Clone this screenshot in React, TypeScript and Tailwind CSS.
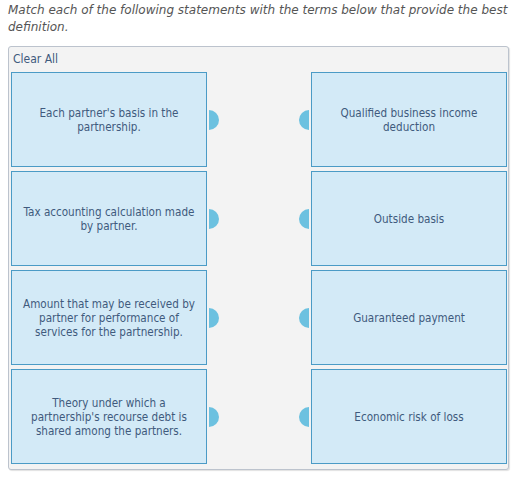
const rows = [
  { left: "Each partner's basis in the partnership.", right: 'Qualified business income deduction' },
  { left: 'Tax accounting calculation made by partner.', right: 'Outside basis' },
  { left: 'Amount that may be received by partner for performance of services for the partnership.', right: 'Guaranteed payment' },
  { left: "Theory under which a partnership's recourse debt is shared among the partners.", right: 'Economic risk of loss' },
];

function Box({ text }: { text: string }) {
  return (
    <div className="w-[196px] h-[95px] bg-[#d3eaf7] border border-[#4b9bc6] flex items-center justify-center px-[10px] text-center text-[11.6px] leading-[14px] text-[#3f5a7d]">
      {text}
    </div>
  );
}

export default function App() {
  return (
    <div className="w-[519px] h-[478px] bg-white pl-[8px] pt-[2px] font-['DejaVu_Sans_Condensed','DejaVu_Sans',sans-serif]">
      <p className="italic font-['DejaVu_Sans',sans-serif] text-[12px] leading-[17px] text-[#555] pr-[4px]">
        Match each of the following statements with the terms below that provide the best definition.
      </p>
      <div className="mt-[10px] w-[501px] bg-[#f3f3f3] border border-[#bcc3cd] rounded-[3px] shadow-[1px_1px_1px_rgba(0,0,0,0.12)] pl-[2px] pr-[1px] pb-[5px]">
        <div className="h-[25px] pl-[2px] pt-[5px] text-[12px] leading-[14px] text-[#3f5a7d]">Clear All</div>
        <div className="flex flex-col gap-[4px]">
          {rows.map((r) => (
            <div key={r.left} className="flex items-center justify-between">
              <div className="flex items-center gap-[2px]">
                <Box text={r.left} />
                <div className="w-[10px] h-[20px] rounded-r-full bg-[#6cc1e0]" />
              </div>
              <div className="flex items-center gap-[2px]">
                <div className="w-[10px] h-[20px] rounded-l-full bg-[#6cc1e0]" />
                <Box text={r.right} />
              </div>
            </div>
          ))}
        </div>
      </div>
    </div>
  );
}
